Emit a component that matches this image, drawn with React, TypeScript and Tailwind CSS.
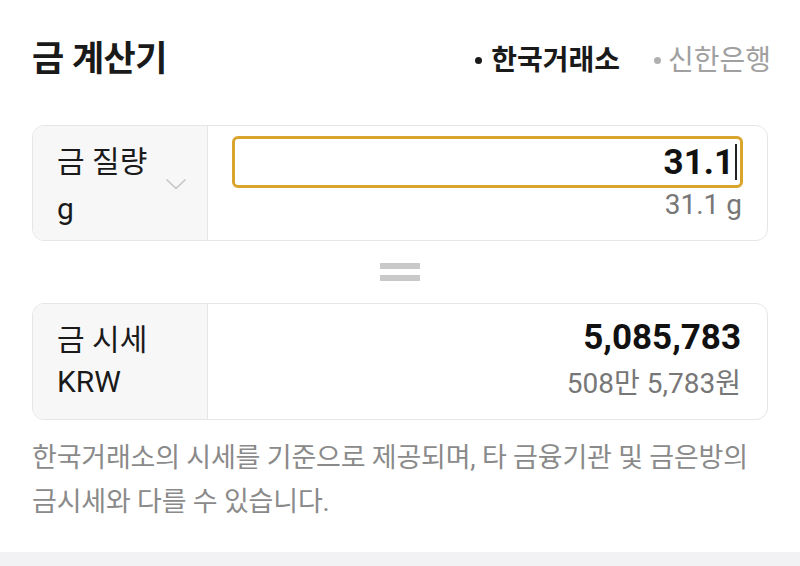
import React from "react"

const font = { fontFamily: '"Roboto", "Noto Sans CJK KR", sans-serif' }

function Chevron() {
  return (
    <svg width="22" height="12" viewBox="0 0 22 12" fill="none">
      <path d="M1.5 1.5l9.5 9 9.5-9" stroke="#c4c4c4" strokeWidth="1.6" />
    </svg>
  )
}

export default function App() {
  return (
    <div className="w-[800px] h-[566px] bg-white flex flex-col overflow-hidden" style={font}>
      <div className="flex-1 px-8">
        {/* Header */}
        <div className="flex items-center justify-between h-[125px] pb-[4px]">
          <h1 className="text-[35px] font-bold text-[#1a1a1a] tracking-[-0.5px]">금 계산기</h1>
          <div className="flex items-center gap-[34px] text-[28px] mr-[-3px]">
            <span className="flex items-center gap-[9px] font-bold text-[#1a1a1a]">
              <span className="w-[7px] h-[7px] rounded-full bg-[#1a1a1a]" />
              한국거래소
            </span>
            <span className="flex items-center gap-[7px] text-[#a0a0a0]">
              <span className="w-[7px] h-[7px] rounded-full bg-[#b0b0b0]" />
              신한은행
            </span>
          </div>
        </div>

        {/* Weight card */}
        <div className="flex h-[116px] rounded-[12px] border border-[#e6e6e8] overflow-hidden">
          <div className="w-[175px] bg-[#f7f7f8] border-r border-[#e6e6e8] pl-[24px] pr-[20px] pt-[12px] flex justify-between">
            <div className="flex flex-col text-[#1a1a1a] text-[30px] leading-[47px]">
              <span>금 질량</span>
              <span>g</span>
            </div>
            <div className="pt-[40px]">
              <Chevron />
            </div>
          </div>
          <div className="flex-1 pl-[24px] pr-[24px] pt-[10px] flex flex-col items-stretch">
            <div className="h-[52px] border-[3px] border-[#d9a52e] rounded-[6px] flex items-center justify-end pr-[3px]">
              <span className="text-[35px] font-bold text-[#111] leading-none">31.1</span>
              <span className="w-[2px] h-[36px] bg-[#222] ml-[1px]" />
            </div>
            <div className="text-right text-[28px] text-[#777] leading-[32px] mt-[1px] pr-[1px]">31.1 g</div>
          </div>
        </div>

        {/* Equals */}
        <div className="flex flex-col items-center gap-[6px] pt-[22px] pb-[22px]">
          <span className="w-[40px] h-[6px] bg-[#c9c9c9]" />
          <span className="w-[40px] h-[6px] bg-[#c9c9c9]" />
        </div>

        {/* Price card */}
        <div className="flex h-[117px] rounded-[12px] border border-[#e6e6e8] overflow-hidden">
          <div className="w-[175px] bg-[#f7f7f8] border-r border-[#e6e6e8] pl-[24px] pt-[15px]">
            <div className="flex flex-col text-[#1a1a1a] text-[30px] leading-[42px]">
              <span>금 시세</span>
              <span>KRW</span>
            </div>
          </div>
          <div className="flex-1 pr-[26px] pt-[12px] flex flex-col items-end">
            <span className="text-[35px] font-bold text-[#111] leading-[44px]">5,085,783</span>
            <span className="text-[28px] text-[#777] leading-[40px] mt-[4px]">508만 5,783원</span>
          </div>
        </div>

        {/* Footnote */}
        <p className="mt-[16px] text-[27px] leading-[44px] text-[#8a8a8a] tracking-[-0.2px]">
          한국거래소의 시세를 기준으로 제공되며, 타 금융기관 및 금은방의
          <br />
          금시세와 다를 수 있습니다.
        </p>
      </div>
      <div className="h-[14px] bg-[#f2f2f4]" />
    </div>
  )
}
